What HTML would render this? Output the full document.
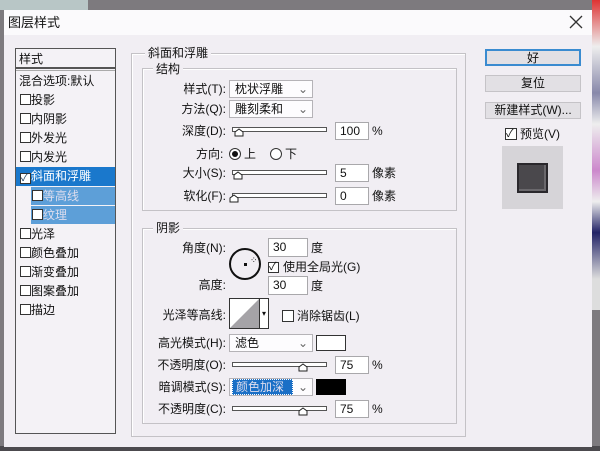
<!DOCTYPE html><html><head><meta charset="utf-8"><style>
*{margin:0;padding:0;box-sizing:border-box}
body{width:600px;height:451px;overflow:hidden;background:#7d7a7e;position:relative;font-family:"Liberation Sans","Noto Sans CJK SC",sans-serif;font-size:12px;color:#111}
.a{position:absolute}
.dlg{left:4px;top:10px;width:588px;height:437px;background:#f1eef3}
.t{white-space:nowrap;line-height:14px}
.box{border:1px solid #555;background:#f4f2f6}
.gb{border:1px solid #c4c2c6;box-shadow:inset 1px 1px 0 #fff}
.inp{background:#fff;border:1px solid #a9a8ab;padding-left:4px;line-height:16px}
.dd{background:#fdfcfe;border:1px solid #b5b3b7}
.sl{height:5px;border:1px solid #555;background:#fff}
.cb{width:11px;height:11px;border:1px solid #333;background:#fff}
.btn{background:#e2e0e4;border:1px solid #c5c3c7;text-align:center;line-height:15px}
.lab{text-align:right;width:96px}
.th{position:absolute;width:10px;height:9px}
</style></head><body>
<div class="a" style="left:0;top:0;width:88px;height:10px;background:#b8c6c6"></div>
<div class="a" style="left:592px;top:0;width:8px;height:310px;background:linear-gradient(#d33,#eee 15%,#88a 30%,#eee 40%,#c8c 55%,#eee 65%,#226 75%,#ddd 90%)"></div>
<div class="a" style="left:0;top:446px;width:600px;height:5px;background:#4c4a4e"></div>
<div class="a dlg"></div>
<div class="a" style="left:4px;top:10px;width:588px;height:25px;background:#fbfafc"></div>
<div class="a t" style="left:8px;top:16px;font-size:13px">图层样式</div>
<svg class="a" style="left:569px;top:15px" width="14" height="14"><path d="M1 1L13 13M13 1L1 13" stroke="#333" stroke-width="1.3"/></svg>

<div class="a box" style="left:15px;top:48px;width:101px;height:386px"></div>
<div class="a t" style="left:19px;top:52px">样式</div>
<div class="a" style="left:16px;top:67px;width:99px;height:2px;background:#555"></div>
<div class="a" style="left:16px;top:70px;width:99px;height:1px;background:#aaa"></div>
<div class="a t" style="left:19px;top:74px">混合选项:默认</div>
<div class="a" style="left:16px;top:167px;width:99px;height:19px;background:#1a78cc"></div>
<div class="a" style="left:31px;top:187px;width:84px;height:18px;background:#5d9fd8"></div>
<div class="a" style="left:31px;top:206px;width:84px;height:18px;background:#5d9fd8"></div>
<div class="a t" style="left:20px;top:93px"><span class="cb" style="display:inline-block;vertical-align:-1px"></span>投影</div>
<div class="a t" style="left:20px;top:112px"><span class="cb" style="display:inline-block;vertical-align:-1px"></span>内阴影</div>
<div class="a t" style="left:20px;top:131px"><span class="cb" style="display:inline-block;vertical-align:-1px"></span>外发光</div>
<div class="a t" style="left:20px;top:150px"><span class="cb" style="display:inline-block;vertical-align:-1px"></span>内发光</div>
<div class="a t" style="left:20px;top:169px;color:#fff"><span class="cb" style="display:inline-block;vertical-align:-1px;font-size:10px;line-height:9px;color:#135">✓</span>斜面和浮雕</div>
<div class="a t" style="left:32px;top:189px;color:#dde"><span class="cb" style="display:inline-block;vertical-align:-1px"></span>等高线</div>
<div class="a t" style="left:32px;top:208px;color:#dde"><span class="cb" style="display:inline-block;vertical-align:-1px"></span>纹理</div>
<div class="a t" style="left:20px;top:227px"><span class="cb" style="display:inline-block;vertical-align:-1px"></span>光泽</div>
<div class="a t" style="left:20px;top:246px"><span class="cb" style="display:inline-block;vertical-align:-1px"></span>颜色叠加</div>
<div class="a t" style="left:20px;top:265px"><span class="cb" style="display:inline-block;vertical-align:-1px"></span>渐变叠加</div>
<div class="a t" style="left:20px;top:284px"><span class="cb" style="display:inline-block;vertical-align:-1px"></span>图案叠加</div>
<div class="a t" style="left:20px;top:303px"><span class="cb" style="display:inline-block;vertical-align:-1px"></span>描边</div>

<div class="a gb" style="left:131px;top:53px;width:335px;height:384px"></div>
<div class="a t" style="left:145px;top:46px;background:#f1eef3;padding:0 3px">斜面和浮雕</div>
<div class="a gb" style="left:142px;top:68px;width:315px;height:143px"></div>
<div class="a t" style="left:153px;top:62px;background:#f1eef3;padding:0 3px">结构</div>

<div class="a t lab" style="left:130px;top:82px">样式(T):</div>
<div class="a dd t" style="left:229px;top:80px;width:84px;height:18px;padding:1px 5px">枕状浮雕<span style="position:absolute;right:4px;color:#666">⌄</span></div>
<div class="a t lab" style="left:130px;top:102px">方法(Q):</div>
<div class="a dd t" style="left:229px;top:100px;width:84px;height:18px;padding:1px 5px">雕刻柔和<span style="position:absolute;right:4px;color:#666">⌄</span></div>
<div class="a t lab" style="left:130px;top:124px">深度(D):</div>
<div class="a sl" style="left:232px;top:127px;width:95px"></div>
<svg class="th" style="left:234px;top:128px"><path d="M1 8V4L5 1L9 4V8Z" fill="#fff" stroke="#222"/></svg>
<div class="a inp t" style="left:335px;top:122px;width:34px;height:18px">100</div>
<div class="a t" style="left:372px;top:124px">%</div>
<div class="a t" style="left:196px;top:147px">方向:</div>
<div class="a" style="left:229px;top:148px;width:12px;height:12px;border:1px solid #333;border-radius:50%;background:#fff"><div style="margin:2px;width:6px;height:6px;border-radius:50%;background:#111"></div></div>
<div class="a t" style="left:244px;top:147px">上</div>
<div class="a" style="left:270px;top:148px;width:12px;height:12px;border:1px solid #333;border-radius:50%;background:#fff"></div>
<div class="a t" style="left:285px;top:147px">下</div>
<div class="a t lab" style="left:130px;top:166px">大小(S):</div>
<div class="a sl" style="left:232px;top:170px;width:95px"></div>
<svg class="th" style="left:233px;top:171px"><path d="M1 8V4L5 1L9 4V8Z" fill="#fff" stroke="#222"/></svg>
<div class="a inp t" style="left:335px;top:164px;width:34px;height:18px">5</div>
<div class="a t" style="left:372px;top:166px">像素</div>
<div class="a t lab" style="left:130px;top:189px">软化(F):</div>
<div class="a sl" style="left:232px;top:193px;width:95px"></div>
<svg class="th" style="left:229px;top:194px"><path d="M1 8V4L5 1L9 4V8Z" fill="#fff" stroke="#222"/></svg>
<div class="a inp t" style="left:335px;top:187px;width:34px;height:18px">0</div>
<div class="a t" style="left:372px;top:189px">像素</div>

<div class="a gb" style="left:142px;top:228px;width:315px;height:196px"></div>
<div class="a t" style="left:153px;top:221px;background:#f1eef3;padding:0 3px">阴影</div>
<div class="a t lab" style="left:130px;top:241px">角度(N):</div>
<div class="a" style="left:229px;top:248px;width:32px;height:32px;border:2px solid #111;border-radius:50%"></div>
<div class="a" style="left:244px;top:263px;width:3px;height:3px;background:#111"></div>
<div class="a t" style="left:250px;top:253px;font-size:9px">⁘</div>
<div class="a inp t" style="left:268px;top:238px;width:40px;height:19px">30</div>
<div class="a t" style="left:311px;top:241px">度</div>
<div class="a cb" style="left:268px;top:262px;font-size:11px;line-height:9px">✓</div>
<div class="a t" style="left:283px;top:260px">使用全局光(G)</div>
<div class="a t lab" style="left:130px;top:278px">高度:</div>
<div class="a inp t" style="left:268px;top:276px;width:40px;height:19px">30</div>
<div class="a t" style="left:311px;top:279px">度</div>
<div class="a t lab" style="left:130px;top:308px">光泽等高线:</div>
<div class="a" style="left:229px;top:298px;width:40px;height:31px;border:1px solid #333;background:#fff;overflow:hidden">
<svg width="30" height="30" style="position:absolute;left:0;top:0"><polygon points="0,29 29,0 29,29" fill="#a5a3a7"/></svg>
<div style="position:absolute;left:29px;top:0;width:1px;height:30px;background:#333"></div>
<div style="position:absolute;left:32px;top:10px;font-size:8px">▾</div></div>
<div class="a cb" style="left:282px;top:310px;width:12px;height:12px"></div>
<div class="a t" style="left:297px;top:309px">消除锯齿(L)</div>
<div class="a t lab" style="left:130px;top:336px">高光模式(H):</div>
<div class="a dd t" style="left:229px;top:334px;width:84px;height:18px;padding:1px 5px">滤色<span style="position:absolute;right:4px;color:#666">⌄</span></div>
<div class="a" style="left:316px;top:335px;width:30px;height:16px;border:1px solid #333;background:#fff"></div>
<div class="a t lab" style="left:130px;top:358px">不透明度(O):</div>
<div class="a sl" style="left:232px;top:362px;width:95px"></div>
<svg class="th" style="left:298px;top:363px"><path d="M1 8V4L5 1L9 4V8Z" fill="#fff" stroke="#222"/></svg>
<div class="a inp t" style="left:335px;top:356px;width:34px;height:18px">75</div>
<div class="a t" style="left:372px;top:358px">%</div>
<div class="a t lab" style="left:130px;top:380px">暗调模式(S):</div>
<div class="a dd t" style="left:229px;top:378px;width:84px;height:18px;padding:1px 2px"><span style="background:#1a6fc6;color:#dde;padding:0 8px 0 3px;border:1px dotted #fff">颜色加深</span><span style="position:absolute;right:4px;color:#666">⌄</span></div>
<div class="a" style="left:316px;top:379px;width:30px;height:16px;background:#000"></div>
<div class="a t lab" style="left:130px;top:402px">不透明度(C):</div>
<div class="a sl" style="left:232px;top:406px;width:95px"></div>
<svg class="th" style="left:298px;top:407px"><path d="M1 8V4L5 1L9 4V8Z" fill="#fff" stroke="#222"/></svg>
<div class="a inp t" style="left:335px;top:400px;width:34px;height:18px">75</div>
<div class="a t" style="left:372px;top:402px">%</div>

<div class="a btn t" style="left:485px;top:49px;width:96px;height:17px;border:2px solid #3a8bd0">好</div>
<div class="a btn t" style="left:485px;top:75px;width:96px;height:17px">复位</div>
<div class="a btn t" style="left:485px;top:102px;width:96px;height:17px">新建样式(W)...</div>
<div class="a cb" style="left:505px;top:128px;width:12px;height:12px;font-size:11px;line-height:10px">✓</div>
<div class="a t" style="left:520px;top:127px">预览(V)</div>
<div class="a" style="left:502px;top:146px;width:61px;height:63px;background:#d6d4d8"></div>
<div class="a" style="left:517px;top:163px;width:31px;height:30px;background:#4a484c;border:2px solid #2a282c;box-shadow:inset -2px -2px 0 #6a686c"></div>
</body></html>
